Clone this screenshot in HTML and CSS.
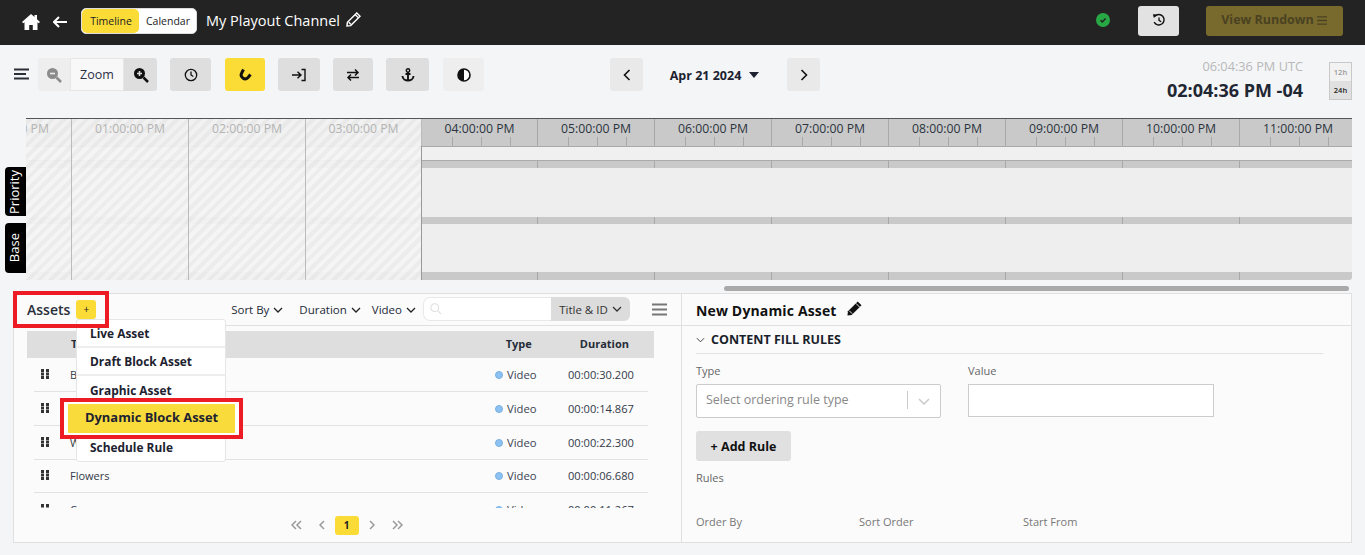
FILE: index.html
```html
<!DOCTYPE html>
<html lang="en">
<head>
<meta charset="utf-8">
<title>My Playout Channel</title>
<link rel="stylesheet" href="styles.css">
</head>
<body>
<header class="topbar">
  <svg class="home" viewBox="0 0 18 16"><path d="M9 0 0 8l1.2 1.3L2.500 8.200V16h4.700v-5h3.600v5h4.700V8.200l1.300 1.100L18 8l-3-2.700V1h-2.500v2.100z"/></svg>
  <svg class="back" viewBox="0 0 14 12"><path d="M6 1 1 6l5 5M1.500 6H14" fill="none" stroke="#fff" stroke-width="2"/></svg>
  <div class="segment"><span class="seg seg-on">Timeline</span><span class="seg">Calendar</span></div>
  <h1 class="channel">My Playout Channel</h1>
  <svg class="pencil" viewBox="0 0 16 16"><path d="M11.500 1 15 4.500 5 14.500 1 15l.5-4zM3 11l2 2M10 3l3 3" fill="none" stroke="#fff" stroke-width="1.500"/></svg>
  <span class="spacer"></span>
  <span class="status"><svg viewBox="0 0 14 14"><circle cx="7" cy="7" r="7" fill="#28a745"/><path d="M4.500 7.200l1.800 1.700 3.300-3.400" fill="none" stroke="#212121" stroke-width="1.500"/></svg></span>
  <button class="history"><svg viewBox="0 0 16 16"><path d="M3.300 3.700A6 6 0 1 1 2.500 10.500" fill="none" stroke="#111" stroke-width="1.600"/><path d="M1 1.500l5 .2-3.800 4z" fill="#111"/><path d="M8 5v3.500l2.500 1.500" fill="none" stroke="#111" stroke-width="1.500"/></svg></button>
  <button class="rundown">View Rundown <svg viewBox="0 0 12 10"><path d="M0 1h11M0 5h11M0 9h11" stroke="#4a4222" stroke-width="1.500"/></svg></button>
</header>

<section class="toolbar">
  <svg class="menu-icon" viewBox="0 0 15 12"><path d="M0 1.500h15M0 6h12M0 10.500h15" stroke="#2b2f38" stroke-width="1.800"/></svg>
  <div class="zoom">
    <button class="zoom-btn zoom-off"><svg viewBox="0 0 16 16"><circle cx="6.500" cy="6.500" r="5.500" fill="#8b8b8b"/><path d="M10.500 10.500 15 15" stroke="#8b8b8b" stroke-width="2.500"/><path d="M4 6.500h5" stroke="#eee" stroke-width="1.600"/></svg></button>
    <span class="zoom-label">Zoom</span>
    <button class="zoom-btn zoom-on"><svg viewBox="0 0 16 16"><circle cx="6.500" cy="6.500" r="5.500" fill="#111"/><path d="M10.500 10.500 15 15" stroke="#111" stroke-width="2.500"/><path d="M4 6.500h5M6.500 4v5" stroke="#ddd" stroke-width="1.600"/></svg></button>
  </div>
  <button class="tool t-clock"><svg viewBox="0 0 14 14"><circle cx="7" cy="7" r="5.700" fill="none" stroke="#111" stroke-width="1.300"/><path d="M7 3.500V7l2.300 1.500" fill="none" stroke="#111" stroke-width="1.300"/></svg></button>
  <button class="tool t-magnet"><svg viewBox="0 0 14 14"><path d="M5.500 1.500 3.700 5A3.900 3.900 0 0 0 10 9.500L12.500 6.500" fill="none" stroke="#111" stroke-width="3"/></svg></button>
  <button class="tool t-login"><svg viewBox="0 0 14 14"><path d="M0 7h8M5.500 3.700 9 7l-3.500 3.300M9.500 1.500H13v11H9.500" fill="none" stroke="#111" stroke-width="1.400"/></svg></button>
  <button class="tool t-swap"><svg viewBox="0 0 14 14"><path d="M1 4.500h11M9 1.500l3 3-3 3M13 9.500H2M5 6.500l-3 3 3 3" fill="none" stroke="#111" stroke-width="1.500"/></svg></button>
  <button class="tool t-anchor"><svg viewBox="0 0 14 14"><circle cx="7" cy="2.500" r="1.700" fill="none" stroke="#111" stroke-width="1.500"/><path d="M7 4v9M4.500 6h5M1.500 8c0 3 3 4.500 5.500 4.500s5.500-1.500 5.500-4.500" fill="none" stroke="#111" stroke-width="1.900"/></svg></button>
  <button class="tool t-half"><svg viewBox="0 0 14 14"><circle cx="7" cy="7" r="6" fill="#fff" stroke="#111" stroke-width="1.600"/><path d="M7 1a6 6 0 0 0 0 12z" fill="#111"/></svg></button>
  <button class="nav-btn nav-prev"><svg viewBox="0 0 8 12"><path d="M6.500 1 1.500 6l5 5" fill="none" stroke="#111" stroke-width="1.600"/></svg></button>
  <div class="date">Apr 21 2024<span class="caret"></span></div>
  <button class="nav-btn"><svg viewBox="0 0 8 12"><path d="M1.500 1l5 5-5 5" fill="none" stroke="#111" stroke-width="1.600"/></svg></button>
  <span class="spacer"></span>
  <div class="clock">
    <div class="utc">06:04:36 PM UTC</div>
    <div class="local">02:04:36 PM -04</div>
  </div>
  <div class="hours"><span class="h12">12h</span><span class="h24">24h</span></div>
</section>

<section class="timeline">
  <div class="labels">
    <span class="lane-tab tab-priority"><span>Priority</span></span>
    <span class="lane-tab tab-base"><span>Base</span></span>
  </div>
  <div class="tracks">
    <div class="ruler">
      <div class="cell cell-past cell-first"><span>12:00:00 PM</span></div>
      <div class="cell cell-past"><span>01:00:00 PM</span></div>
      <div class="cell cell-past"><span>02:00:00 PM</span></div>
      <div class="cell cell-past cell-short"><span>03:00:00 PM</span></div>
      <div class="cell cell-short"><span>04:00:00 PM</span><i class="ticks"></i></div>
      <div class="cell"><span>05:00:00 PM</span><i class="ticks"></i></div>
      <div class="cell"><span>06:00:00 PM</span><i class="ticks"></i></div>
      <div class="cell"><span>07:00:00 PM</span><i class="ticks"></i></div>
      <div class="cell"><span>08:00:00 PM</span><i class="ticks"></i></div>
      <div class="cell"><span>09:00:00 PM</span><i class="ticks"></i></div>
      <div class="cell"><span>10:00:00 PM</span><i class="ticks"></i></div>
      <div class="cell"><span>11:00:00 PM</span><i class="ticks"></i></div>
    </div>
    <div class="blank"></div>
    <div class="band"></div>
    <div class="lane lane-a"></div>
    <div class="band"></div>
    <div class="lane lane-b"></div>
    <div class="band band-last"></div>
    <div class="past"></div>
  </div>
</section>
<div class="hscroll"><span class="thumb"></span></div>

<main class="panels">
  <section class="assets">
    <div class="assets-head">
      <h2 class="assets-title">Assets</h2>
      <button class="add">+</button>
      <span class="spacer"></span>
      <span class="filter f-sort">Sort By <svg viewBox="0 0 10 6"><path d="M1 1l4 4 4-4" fill="none" stroke="#222" stroke-width="1.300"/></svg></span>
      <span class="filter f-dur">Duration <svg viewBox="0 0 10 6"><path d="M1 1l4 4 4-4" fill="none" stroke="#222" stroke-width="1.300"/></svg></span>
      <span class="filter f-vid">Video <svg viewBox="0 0 10 6"><path d="M1 1l4 4 4-4" fill="none" stroke="#222" stroke-width="1.300"/></svg></span>
      <div class="search">
        <span class="search-box"><svg viewBox="0 0 14 14"><circle cx="5.500" cy="5.500" r="4.500" fill="none" stroke="#ddd" stroke-width="1.200"/><path d="M9 9l4 4" stroke="#ddd" stroke-width="1.200"/></svg></span>
        <span class="search-mode">Title &amp; ID <svg viewBox="0 0 10 6"><path d="M1 1l4 4 4-4" fill="none" stroke="#333" stroke-width="1.300"/></svg></span>
      </div>
      <svg class="list-menu" viewBox="0 0 15 13"><path d="M0 1.500h15M0 6.500h15M0 11.500h15" stroke="#777" stroke-width="1.800"/></svg>
    </div>
    <div class="table-head">
      <span class="th-title">Title</span>
      <span class="th-type">Type</span>
      <span class="th-dur">Duration</span>
    </div>
    <div class="rows">
      <div class="row"><svg class="grip" viewBox="0 0 8 10"><path d="M0 0h3v3H0zM5 0h3v3H5zM0 3.500h3v3H0zM5 3.500h3v3H5zM0 7h3v3H0zM5 7h3v3H5z" fill="#333"/></svg><span class="r-title">Big Buck</span><span class="r-type"><i class="dot"></i>Video</span><span class="r-dur">00:00:30.200</span></div>
      <div class="row"><svg class="grip" viewBox="0 0 8 10"><path d="M0 0h3v3H0zM5 0h3v3H5zM0 3.500h3v3H0zM5 3.500h3v3H5zM0 7h3v3H0zM5 7h3v3H5z" fill="#333"/></svg><span class="r-title">Bees</span><span class="r-type"><i class="dot"></i>Video</span><span class="r-dur">00:00:14.867</span></div>
      <div class="row"><svg class="grip" viewBox="0 0 8 10"><path d="M0 0h3v3H0zM5 0h3v3H5zM0 3.500h3v3H0zM5 3.500h3v3H5zM0 7h3v3H0zM5 7h3v3H5z" fill="#333"/></svg><span class="r-title">Waves</span><span class="r-type"><i class="dot"></i>Video</span><span class="r-dur">00:00:22.300</span></div>
      <div class="row row-short"><svg class="grip" viewBox="0 0 8 10"><path d="M0 0h3v3H0zM5 0h3v3H5zM0 3.500h3v3H0zM5 3.500h3v3H5zM0 7h3v3H0zM5 7h3v3H5z" fill="#333"/></svg><span class="r-title">Flowers</span><span class="r-type"><i class="dot"></i>Video</span><span class="r-dur">00:00:06.680</span></div>
      <div class="row"><svg class="grip" viewBox="0 0 8 10"><path d="M0 0h3v3H0zM5 0h3v3H5zM0 3.500h3v3H0zM5 3.500h3v3H5zM0 7h3v3H0zM5 7h3v3H5z" fill="#333"/></svg><span class="r-title">Cow</span><span class="r-type"><i class="dot"></i>Video</span><span class="r-dur">00:00:11.267</span></div>
    </div>
    <nav class="pager">
      <svg class="pg pg-2" viewBox="0 0 11 10"><path d="M5 1 1 5l4 4M10 1 6 5l4 4" fill="none" stroke="#999" stroke-width="1.500"/></svg>
      <svg class="pg pg-1 pg-prev" viewBox="0 0 6 10"><path d="M5 1 1 5l4 4" fill="none" stroke="#999" stroke-width="1.500"/></svg>
      <span class="pg-on">1</span>
      <svg class="pg pg-1 pg-next" viewBox="0 0 6 10"><path d="M1 1l4 4-4 4" fill="none" stroke="#999" stroke-width="1.500"/></svg>
      <svg class="pg pg-2" viewBox="0 0 11 10"><path d="M1 1l4 4-4 4M6 1l4 4-4 4" fill="none" stroke="#999" stroke-width="1.500"/></svg>
    </nav>
    <div class="menu">
      <div class="menu-item">Live Asset</div>
      <div class="menu-item">Draft Block Asset</div>
      <div class="menu-item menu-third">Graphic Asset</div>
      <div class="menu-item menu-active"><span>Dynamic Block Asset</span></div>
      <div class="menu-item menu-end">Schedule Rule</div>
    </div>
    <span class="mark mark-add"></span>
  </section>

  <section class="detail">
    <div class="detail-head">
      <h2 class="detail-title">New Dynamic Asset</h2>
      <svg viewBox="0 0 16 16"><path d="M11.500.5l4 4L5 15 .5 15.500 1 11z" fill="#111"/><path d="M9.500 2.500l4 4M2.500 10.500l3 3" stroke="#fbfbfb" stroke-width="1"/></svg>
    </div>
    <div class="rules-body">
      <div class="rules-head"><svg viewBox="0 0 10 6"><path d="M1 1l4 4 4-4" fill="none" stroke="#333" stroke-width="1"/></svg><span>CONTENT FILL RULES</span></div>
      <div class="fields">
        <label class="field f-type">
          <span class="field-label">Type</span>
          <span class="select"><span class="placeholder">Select ordering rule type</span><i class="sep"></i><svg viewBox="0 0 12 7"><path d="M1 1l5 5 5-5" fill="none" stroke="#ccc" stroke-width="1.600"/></svg></span>
        </label>
        <label class="field f-value">
          <span class="field-label">Value</span>
          <span class="input"></span>
        </label>
      </div>
      <button class="add-rule">+ Add Rule</button>
      <div class="rules-label">Rules</div>
      <div class="columns"><span class="c-order">Order By</span><span class="c-sort">Sort Order</span><span>Start From</span></div>
    </div>
  </section>
</main>
</body>
</html>
```
FILE: styles.css
```css
* { box-sizing: border-box; }
html, body { margin: 0; height: 555px; overflow: hidden; }
body { background: #f4f5f7; font-family: "Open Sans", "Liberation Sans", sans-serif; color: #1f2530; width: 1365px; }
button { font-family: inherit; border: 0; padding: 0; cursor: pointer; }
h1, h2 { margin: 0; }
svg { display: block; }
.spacer { flex: 1; }

/* top bar */
.topbar { height: 45px; background: #232323; display: flex; align-items: center; padding: 0 22px; }
.home { width: 18px; height: 16px; fill: #fff; margin-top: -1px; }
.back { width: 14px; height: 12px; margin: -2px 0 0 13px; }
.segment { display: flex; margin: -3px 0 0 14px; width: 116px; height: 26px; background: #fff; border: 1px solid #ddd; border-radius: 5px; font-size: 10.5px; }
.seg { display: flex; align-items: center; justify-content: center; flex: 1; color: #222; padding-left: 1px; }
.seg-on { background: #fbdc37; border-radius: 5px; flex: 0 0 57px; }
.channel { font-size: 14.5px; font-weight: 400; color: #fff; margin: -5px 0 0 9px; }
.pencil { width: 15px; height: 15px; margin: -6px 0 0 6px; }
.status svg { width: 14px; height: 14px; }
.status { margin: -5px 28px 0 0; }
.history { width: 41px; height: 30px; background: #e2e2e2; border-radius: 3px; display: flex; align-items: center; justify-content: center; margin: -3px 27px 0 0; }
.history svg { width: 14px; height: 14px; margin-top: -3px; }
.rundown { width: 137px; height: 30px; background: #786a2d; color: #4a4222; border-radius: 3px; font-size: 12.5px; font-weight: 700; display: flex; align-items: center; justify-content: center; gap: 3px; margin: -3px 0 0 0; padding-bottom: 3px; }
.rundown svg { width: 11px; height: 9px; margin-top: 2px; }

/* toolbar */
.toolbar { height: 73px; display: flex; align-items: flex-start; padding: 13px 13px 0 14px; }
.menu-icon { width: 15px; height: 12px; margin: 10px 9px 0 0; }
.zoom { display: flex; height: 33px; }
.zoom-btn { width: 33px; height: 33px; display: flex; align-items: center; justify-content: center; }
.zoom-btn svg { width: 16px; height: 16px; }
.zoom-off { background: #eeeeee; border-radius: 3px 0 0 3px; width: 32px; }
.zoom-on { background: #dedede; border-radius: 0 3px 3px 0; }
.zoom-label { width: 54px; border: 1px solid #e6e6e6; background: #f8f8f8; font-size: 12.5px; display: flex; align-items: center; justify-content: center; color: #2b2f45; }
.tool { height: 33px; background: #dedede; border-radius: 3px; display: flex; align-items: center; justify-content: center; }
.tool svg { width: 14px; height: 14px; }
.t-clock { width: 41px; margin-left: 13px; }
.t-magnet { width: 40px; margin-left: 14px; background: #fbdc37; }
.t-login { width: 42px; margin-left: 13px; }
.t-swap { width: 40px; margin-left: 13px; }
.t-anchor { width: 43px; margin-left: 13px; }
.t-half { width: 41px; margin-left: 14px; background: #eeeeee; }
.nav-btn { width: 33px; height: 33px; background: #e9e9e9; border-radius: 3px; display: flex; align-items: center; justify-content: center; }
.nav-btn svg { width: 8px; height: 12px; }
.nav-prev { margin-left: 126px; }
.date { width: 144px; height: 33px; font-size: 12.5px; font-weight: 700; color: #1c2230; display: flex; align-items: center; justify-content: center; padding: 2px 1px 0 0; }
.caret { width: 0; height: 0; border: 5px solid transparent; border-top: 6px solid #1c2230; border-bottom: 0; margin-left: 8px; margin-top: -2px; }
.clock { text-align: right; }
.utc { font-size: 12.75px; color: #b8b8b8; line-height: 17px; }
.local { font-size: 18px; font-weight: 700; color: #1f2733; line-height: 24px; margin-top: 3px; }
.hours { width: 23px; height: 38px; margin: 4px 0 0 26px; border: 1px solid #c8c8c8; display: flex; flex-direction: column; font-size: 7.5px; font-weight: 600; text-align: center; background: #f2f2f2; }
.h12 { flex: 1; line-height: 18px; color: #999; }
.h24 { flex: 1; line-height: 18px; background: #e0e0e0; color: #222; }

/* timeline */
.timeline { display: flex; height: 162px; }
.labels { width: 26px; padding: 49px 0 0 5px; display: flex; flex-direction: column; gap: 7px; }
.lane-tab { width: 21px; background: #000; color: #fff; border-radius: 4px 0 0 4px; font-size: 13px; display: flex; align-items: center; justify-content: center; padding-right: 3px; }
.lane-tab span { writing-mode: vertical-rl; transform: rotate(180deg); }
.tab-priority { height: 49px; }
.tab-base { height: 50px; }
.tracks { position: relative; width: 1326px; display: flex; flex-direction: column; overflow: hidden; border-top: 1px solid #555; background: #eeeeee; border-radius: 0 0 3px 0; }
.ruler { display: flex; height: 28px; background: #c9c9c9; border-bottom: 1px solid #aaa; flex: none; }
.cell { position: relative; flex: 0 0 117px; border-right: 1px solid #a8a8a8; font-size: 12.25px; color: #2b3440; display: flex; justify-content: center; padding-top: 2px; white-space: nowrap; line-height: 16px; }
.cell-past { z-index: 1; color: #b4b4b4; border-right-color: #bbb; }
.cell-first { flex: 0 0 46px; justify-content: flex-end; padding-right: 22px; overflow: hidden; }
.cell-first span { flex: none; }
.cell-short { flex: 0 0 116px; }
.ticks { position: absolute; left: 2px; right: 0; bottom: 0; height: 9px; background: repeating-linear-gradient(90deg, transparent 0 28px, #a8a8a8 28px 29px); }
.blank { height: 14px; flex: none; border-bottom: 1px solid #aaa; background: #f0f0f0; }
.band { height: 7px; flex: none; background-color: #c9c9c9; background-image: linear-gradient(90deg, #a8a8a8 1px, transparent 1px); background-size: 117px 100%; background-position: 511px 0; }
.band-last { height: 8px; }
.lane { flex: none; background: #eeeeee; }
.lane-a { height: 49px; }
.lane-b { height: 48px; }
.past { position: absolute; left: 0; top: 0; bottom: 0; width: 396px; background-image: linear-gradient(90deg, transparent 45px, #bbb 45px, #bbb 46px, transparent 46px), linear-gradient(90deg, transparent 162px, #bbb 162px, #bbb 163px, transparent 163px), linear-gradient(90deg, transparent 279px, #bbb 279px, #bbb 280px, transparent 280px), repeating-linear-gradient(-45deg, rgba(245,245,245,.92) 0 4px, rgba(236,236,236,.92) 4px 8px); border-right: 1px solid #999; }
.hscroll { height: 13px; padding: 6px 16px 0 724px; }
.thumb { display: block; height: 5px; background: #a9a9a9; border-radius: 3px; }

/* panels */
.panels { display: flex; width: 1339px; height: 250px; margin-left: 13px; background: #fbfbfb; border: 1px solid #e0e0e0; }
.assets { position: relative; width: 668px; border-right: 1px solid #e0e0e0; flex: none; display: flex; flex-direction: column; }
.assets-head { display: flex; align-items: center; height: 32px; border-bottom: 1px solid #e0e0e0; padding: 0 14px 1px 13px; flex: none; }
.assets-title { font-size: 14px; font-weight: 600; color: #2a2f3a; }
.add { width: 20px; height: 19px; margin-left: 6px; background: #fbdc37; border-radius: 3px; font-size: 10px; color: #222; }
.filter { font-size: 11.5px; color: #222a38; display: flex; align-items: center; gap: 4px; white-space: nowrap; }
.filter svg { width: 10px; height: 6px; margin-top: 1px; }
.f-dur { margin-left: 16px; }
.f-vid { margin-left: 11px; }
.search { display: flex; width: 207px; height: 24px; margin-left: 7px; }
.search-box { width: 128px; border: 1px solid #e8e8e8; border-right: 0; background: #fff; border-radius: 7px 0 0 7px; padding: 5px 0 0 6px; }
.search-box svg { width: 12px; height: 12px; }
.search-mode { flex: 1; background: #dcdcdc; border-radius: 0 6px 6px 0; font-size: 11.5px; color: #333; display: flex; align-items: center; justify-content: center; gap: 4px; }
.search-mode svg { width: 10px; height: 6px; }
.list-menu { width: 15px; height: 13px; margin-left: 22px; }
.table-head { position: relative; height: 27px; margin: 5px 0 0 13px; width: 627px; background: #dedede; font-size: 11px; font-weight: 700; color: #262c38; display: flex; align-items: center; flex: none; padding-bottom: 2px; }
.th-title { margin-left: 44px; }
.th-type { margin-left: auto; }
.th-dur { margin: 0 25px 0 48px; }
.rows { height: 150px; overflow: hidden; margin-left: 20px; width: 614px; flex: none; }
.row { height: 34px; display: flex; align-items: center; border-bottom: 1px solid #e2e2e2; font-size: 11px; color: #333a48; }
.row-short { height: 33px; padding-bottom: 1px; }
.grip { width: 8px; height: 10px; margin: -2px 0 0 7px; flex: none; }
.r-title { margin-left: 21px; flex: 1; }
.r-type { display: flex; align-items: center; gap: 4px; width: 73px; color: #3a4252; font-size: 11.25px; }
.dot { width: 8px; height: 8px; border-radius: 50%; background: #8cc2f3; border: 1px solid #7ab0e0; }
.r-dur { width: 65px; margin-right: 15px; white-space: nowrap; font-size: 11.1px; }
.pager { display: flex; align-items: center; justify-content: center; height: 20px; margin-top: 7px; width: 668px; padding-right: 3px; }
.pg { height: 10px; flex: none; }
.pg-2 { width: 11px; }
.pg-1 { width: 6px; }
.pg-prev { margin: 0 10px 0 17px; }
.pg-next { margin: 0 17px 0 10px; }
.pg-on { width: 24px; height: 19px; background: #fbdc37; border-radius: 3px; color: #222; font-size: 10px; font-weight: 700; text-align: center; line-height: 19px; }
.menu { position: absolute; left: 62px; top: 25px; width: 150px; height: 143px; background: #fff; border: 1px solid #e6e6e6; border-radius: 3px; z-index: 2; font-size: 11.9px; font-weight: 700; color: #1d2230; }
.menu-item { height: 28px; padding: 0 13px; line-height: 26px; border-bottom: 2px solid #eee; white-space: nowrap; }
.menu-third { line-height: 28px; }
.menu-item.menu-active { position: relative; height: 41px; margin: -6px -18px -1px -17px; padding: 4px; border: 0; background: #fff; box-shadow: inset 0 0 0 4px #ed1c24; z-index: 3; }
.menu-active span { display: block; height: 29px; margin: 2px 4px 0 4px; padding-left: 17px; background: #f9dc3c; line-height: 27px; font-size: 12.9px; border-radius: 1px; }
.menu-end { border: 0; line-height: 19px; }
.mark { position: absolute; pointer-events: none; border: 4px solid #ed1c24; }
.mark-add { left: -1px; top: -3px; width: 96px; height: 37px; z-index: 4; }

/* detail */
.detail { flex: 1; }
.detail-head { height: 32px; border-bottom: 1px solid #e0e0e0; display: flex; align-items: center; padding: 1px 0 0 14px; gap: 10px; }
.detail-title { font-size: 14px; font-weight: 700; color: #111; letter-spacing: .15px; }
.detail-head svg { width: 15px; height: 15px; margin-top: -3px; }
.rules-body { padding: 0 28px 0 14px; }
.rules-head { height: 28px; display: flex; align-items: center; gap: 6px; border-bottom: 1px solid #e2e2e2; font-size: 12.5px; font-weight: 700; color: #1a1f2c; }
.rules-head svg { width: 9px; height: 6px; }
.fields { display: flex; gap: 27px; margin-top: 9px; }
.field { display: block; }
.field-label { display: block; font-size: 11px; color: #666; line-height: 15px; margin-bottom: 6px; }
.select { width: 245px; height: 34px; background: #fff; border: 1px solid #ccc; border-radius: 2px; display: flex; align-items: center; padding: 0 10px 2px 9px; }
.placeholder { flex: 1; font-size: 12.5px; color: #888; padding-bottom: 2px; }
.sep { width: 1px; height: 18px; background: #ccc; margin-right: 10px; }
.select svg { width: 12px; height: 7px; margin-top: 3px; }
.input { display: block; width: 246px; height: 33px; background: #fff; border: 1px solid #ccc; }
.add-rule { display: block; margin-top: 13px; width: 95px; height: 30px; background: #e0e0e0; border-radius: 3px; font-size: 12.5px; font-weight: 700; color: #111; }
.rules-label { font-size: 11px; color: #666; margin-top: 9px; line-height: 15px; }
.columns { display: flex; margin-top: 29px; font-size: 11px; color: #777; line-height: 15px; }
.c-order { width: 163px; }
.c-sort { width: 164px; }
```
